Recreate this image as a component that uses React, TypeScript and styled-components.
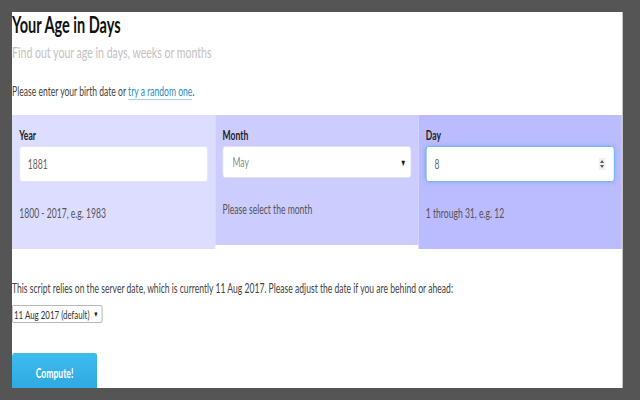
import { useState } from 'react'
import styled, { createGlobalStyle } from 'styled-components'

const GlobalStyle = createGlobalStyle`
  body {
    margin: 0;
    background: #555555;
    font-family: Lato, "Liberation Sans", sans-serif;
  }
`

// the shot is squeezed sideways, so the page is laid out wide and compressed
const SQUEEZE = 0.66
const wide = (px: number) => Math.round(px / SQUEEZE)

const Frame = styled.div`
  padding: 12px;
  height: 400px;
  box-sizing: border-box;
  overflow: hidden;
`

const Panel = styled.div`
  width: 610px;
  height: 376px;
  background: #fff;
  border-right: 1px solid #c4c4c4;
  overflow: hidden;
`

const Page = styled.div`
  width: ${wide(610)}px;
  transform: scaleX(${SQUEEZE});
  transform-origin: 0 0;
  color: #444;
`

const Title = styled.h1`
  margin: 0;
  font-size: 22px;
  line-height: 26px;
  font-weight: 700;
  color: #111;
`

const Subtitle = styled.p`
  margin: 3px 0 0;
  font-size: 16px;
  line-height: 22px;
  color: #c2c2c2;
`

const Text = styled.p<{ $top: number }>`
  margin: ${(p) => p.$top}px 0 0;
  font-size: 13px;
  line-height: 18px;
  color: #444;
`

const Link = styled.a`
  color: #2f8dbd;
  text-decoration: none;
  border-bottom: 1px solid #a7d3ea;
`

const Columns = styled.div`
  display: flex;
  align-items: flex-start;
  margin-top: 15px;
`

const Column = styled.div<{ $bg: string }>`
  flex: 1;
  padding: 12px ${wide(7)}px 27px;
  background: ${(p) => p.$bg};
`

const Label = styled.label`
  display: block;
  font-size: 13px;
  line-height: 16px;
  font-weight: 700;
  color: #222;
  margin-bottom: 3px;
`

const Field = styled.div`
  position: relative;
`

const Input = styled.input<{ $focus?: boolean }>`
  display: block;
  width: 100%;
  box-sizing: border-box;
  height: 36px;
  padding: 0 ${wide(8)}px;
  border: 1px solid ${(p) => (p.$focus ? '#66afe9' : '#e2e2f4')};
  border-radius: 4px;
  box-shadow: ${(p) => (p.$focus ? '0 0 5px rgba(102,175,233,.7)' : 'none')};
  background: #fff;
  font: 13px Lato, "Liberation Sans", sans-serif;
  color: #666;
  outline: none;
  -moz-appearance: textfield;
  &::-webkit-inner-spin-button,
  &::-webkit-outer-spin-button {
    -webkit-appearance: none;
    margin: 0;
  }
`

const Select = styled.select`
  display: block;
  width: 100%;
  height: 32px;
  padding: 0 ${wide(9)}px;
  border: 1px solid #dcdcf6;
  border-radius: 4px;
  background: #fff;
  font: 13px Lato, "Liberation Sans", sans-serif;
  color: #8a8a8a;
  appearance: none;
  outline: none;
`

const Caret = styled.span`
  position: absolute;
  right: ${wide(5)}px;
  top: 50%;
  transform: translateY(-50%);
  font-size: 9px;
  color: #111;
  pointer-events: none;
`

const Spinner = styled.span`
  position: absolute;
  right: ${wide(9)}px;
  top: 50%;
  transform: translateY(-50%);
  display: flex;
  flex-direction: column;
  align-items: center;
  gap: 2px;
  padding: 2px 2px;
  background: #f0f0f0;
  pointer-events: none;
`

const Hint = styled.p`
  margin: 22px 0 0;
  font-size: 13px;
  line-height: 18px;
  color: #555;
`

const SmallField = styled.div`
  position: relative;
  display: inline-block;
  margin-top: 8px;
`

const DateSelect = styled.select`
  display: block;
  height: 18px;
  padding: 0 ${wide(12)}px 0 2px;
  border: 1px solid #a9a9a9;
  border-radius: 2px;
  background: #fff;
  font: 12px Lato, "Liberation Sans", sans-serif;
  color: #333;
  appearance: none;
  outline: none;
`

const SmallCaret = styled.span`
  position: absolute;
  right: ${wide(4)}px;
  top: 50%;
  transform: translateY(-50%);
  font-size: 8px;
  color: #111;
  pointer-events: none;
`

const Button = styled.button`
  display: block;
  margin-top: 30px;
  width: ${wide(85)}px;
  height: 40px;
  border: none;
  border-radius: 4px;
  background: linear-gradient(#3dbcef, #2ea7e0);
  color: #fff;
  font: 700 13px Lato, "Liberation Sans", sans-serif;
  cursor: pointer;
`

const months = [
  'January', 'February', 'March', 'April', 'May', 'June',
  'July', 'August', 'September', 'October', 'November', 'December',
]

export default function App() {
  const [year, setYear] = useState('1881')
  const [month, setMonth] = useState('May')
  const [day, setDay] = useState('8')

  return (
    <>
      <GlobalStyle />
      <Frame>
        <Panel>
          <Page>
            <Title>Your Age in Days</Title>
            <Subtitle>Find out your age in days, weeks or months</Subtitle>
            <Text $top={19}>
              Please enter your birth date or <Link href="#">try a random one</Link>.
            </Text>

            <Columns>
              <Column $bg="#ddddff">
                <Label>Year</Label>
                <Input value={year} onChange={(e) => setYear(e.target.value)} />
                <Hint>1800 - 2017, e.g. 1983</Hint>
              </Column>
              <Column $bg="#ccccff">
                <Label>Month</Label>
                <Field>
                  <Select value={month} onChange={(e) => setMonth(e.target.value)}>
                    {months.map((m) => (
                      <option key={m} value={m}>
                        {m === 'May' ? 'May' : m}
                      </option>
                    ))}
                  </Select>
                  <Caret>▼</Caret>
                </Field>
                <Hint>Please select the month</Hint>
              </Column>
              <Column $bg="#bbbbff">
                <Label>Day</Label>
                <Field>
                  <Input
                    $focus
                    type="number"
                    value={day}
                    onChange={(e) => setDay(e.target.value)}
                  />
                  <Spinner>
                    <svg width="6" height="3" viewBox="0 0 6 3">
                      <path d="M3 0 L6 3 L0 3 Z" fill="#555" />
                    </svg>
                    <svg width="6" height="3" viewBox="0 0 6 3">
                      <path d="M0 0 L6 0 L3 3 Z" fill="#555" />
                    </svg>
                  </Spinner>
                </Field>
                <Hint>1 through 31, e.g. 12</Hint>
              </Column>
            </Columns>

            <Text $top={30}>
              This script relies on the server date, which is currently 11 Aug 2017. Please
              adjust the date if you are behind or ahead:
            </Text>
            <SmallField>
              <DateSelect defaultValue="default">
                <option value="default">11 Aug 2017 (default)</option>
                <option value="prev">10 Aug 2017</option>
                <option value="next">12 Aug 2017</option>
              </DateSelect>
              <SmallCaret>▼</SmallCaret>
            </SmallField>

            <Button>Compute!</Button>
          </Page>
        </Panel>
      </Frame>
    </>
  )
}
